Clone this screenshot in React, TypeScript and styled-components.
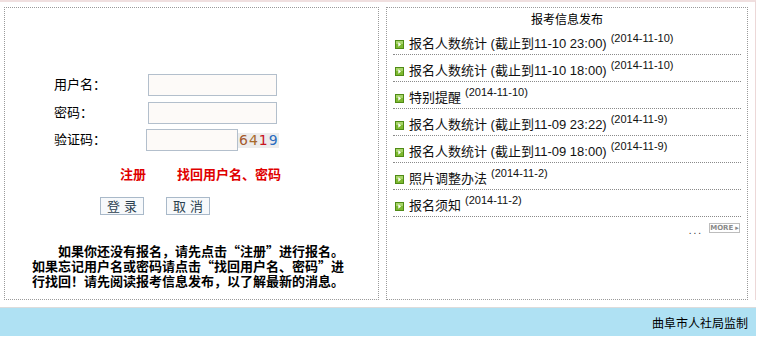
import styled, { createGlobalStyle } from 'styled-components'

const GlobalStyle = createGlobalStyle`
    body {
        margin: 0;
        background: #fff;
        font-family: "Liberation Sans", "Noto Sans CJK SC", sans-serif;
        color: #000;
    }
`

const Page = styled.div`
    width: 756px;
`

const Main = styled.div`
    display: flex;
    gap: 7px;
    padding: 5px 7px 0 4px;
    border-top: 2px solid #f0dfdf;
    border-right: 1px solid #ecd8d8;
`

const Panel = styled.div<{ $width: number }>`
    width: ${p => p.$width}px;
    height: 293px;
    box-sizing: border-box;
    border: 1px dotted #9a9a9a;
    display: flex;
    flex-direction: column;
`

const LoginForm = styled.div`
    display: grid;
    grid-template-columns: 94px 131px;
    grid-auto-rows: 22px;
    row-gap: 5.5px;
    align-items: center;
    margin: 66px 0 0 49px;
    font-size: 13px;
`

const Label = styled.label`
    line-height: 22px;
`

const Input = styled.input<{ $width?: number }>`
    box-sizing: border-box;
    width: ${p => p.$width ?? 129}px;
    height: 22px;
    border: 1px solid #b3bfcc;
    background: #fdfaf8;
    padding: 0 3px;
    font-size: 13px;
    outline: none;
`

const CaptchaCell = styled.div`
    display: flex;
    align-items: center;
    margin-left: -2px;
`

const Captcha = styled.span`
    display: inline-flex;
    align-items: center;
    height: 15px;
    width: 40px;
    background: #ececec;
    font-family: "DejaVu Sans", sans-serif;
    font-size: 14px;
    letter-spacing: 1px;
    padding-left: 1px;
`

const Digit = styled.span<{ $color: string }>`
    color: ${p => p.$color};
`

const Links = styled.div`
    display: flex;
    gap: 31px;
    margin: 15px 0 0 115px;
    line-height: 16px;
    font-size: 13px;
    font-weight: bold;
    font-family: "Noto Sans CJK SC", sans-serif;
`

const RedLink = styled.a`
    color: #e00000;
    text-decoration: none;
    cursor: pointer;
`

const Buttons = styled.div`
    display: flex;
    gap: 22px;
    margin: 15px 0 0 95px;
`

const Btn = styled.button`
    width: 44px;
    height: 18px;
    padding: 0;
    border: 1px solid #a9b9c9;
    background: #f7f9fb;
    color: #2b3f4f;
    font-family: "Noto Sans CJK SC", sans-serif;
    font-size: 13px;
    line-height: 16px;
    letter-spacing: 4px;
    text-indent: 4px;
    cursor: pointer;
`

const Notice = styled.p`
    margin: 28px 0 0 27px;
    width: 316px;
    font-size: 13px;
    line-height: 15px;
    font-weight: bold;
    text-indent: 26px;
    font-family: "Noto Sans CJK SC", sans-serif;
`

const NewsTitle = styled.div`
    text-align: center;
    font-size: 12px;
    line-height: 16px;
    margin-top: 3px;
    font-family: "Noto Sans CJK SC", sans-serif;
`

const NewsList = styled.ul`
    list-style: none;
    margin: 1px 6px 0 6px;
    padding: 0;
`

const NewsItem = styled.li`
    display: flex;
    align-items: flex-start;
    padding: 8px 0 2px 2px;
    height: 16px;
    border-bottom: 1px dotted #8a8a8a;
    font-size: 13px;
    line-height: 16px;
    color: #111;
`

const Bullet = styled.svg`
    flex: none;
    margin: 4px 5px 0 0;
`

const NewsDate = styled.span`
    font-size: 11px;
    line-height: 11px;
    margin-left: 4px;
    position: relative;
    top: -3px;
    font-family: "Liberation Sans", sans-serif;
`

const MoreRow = styled.div`
    display: flex;
    justify-content: flex-end;
    align-items: center;
    gap: 6px;
    margin: 4px 7px 0 0;
`

const Dots = styled.span`
    font-size: 10px;
    letter-spacing: 2px;
    color: #333;
    line-height: 8px;
    padding-top: 6px;
`

const MoreBtn = styled.span`
    display: inline-flex;
    align-items: center;
    justify-content: center;
    gap: 2px;
    width: 31px;
    height: 10px;
    box-sizing: border-box;
    border: 1px solid #bdbdbd;
    font-size: 7px;
    font-weight: bold;
    color: #8a8a8a;
    font-family: "DejaVu Sans", sans-serif;
`

const Footer = styled.div`
    margin-top: 7px;
    border-top: 1px solid #dcdcdc;
    background: #afe1f3;
    height: 28px;
    display: flex;
    align-items: center;
    justify-content: flex-end;
    padding-right: 8px;
    font-size: 12px;
    font-family: "Noto Sans CJK SC", sans-serif;
`

const news = [
    { title: '报名人数统计 (截止到11-10 23:00)', date: '(2014-11-10)' },
    { title: '报名人数统计 (截止到11-10 18:00)', date: '(2014-11-10)' },
    { title: '特别提醒', date: '(2014-11-10)' },
    { title: '报名人数统计 (截止到11-09 23:22)', date: '(2014-11-9)' },
    { title: '报名人数统计 (截止到11-09 18:00)', date: '(2014-11-9)' },
    { title: '照片调整办法', date: '(2014-11-2)' },
    { title: '报名须知', date: '(2014-11-2)' },
]

function ArrowIcon() {
    return (
        <Bullet width="9" height="9" viewBox="0 0 9 9">
            <rect x="0.5" y="0.5" width="8" height="8" fill="#7cb82f" stroke="#4f8a16" />
            <rect x="1" y="1" width="7" height="3" fill="#a6d468" />
            <path d="M3.3 2.2 L6 4.5 L3.3 6.8 Z" fill="#fff" />
        </Bullet>
    )
}

export default function App() {
    return (
        <Page>
            <GlobalStyle />
            <Main>
                <Panel $width={375}>
                    <LoginForm>
                        <Label htmlFor="user">用户名：</Label>
                        <Input id="user" type="text" />
                        <Label htmlFor="pwd">密码：</Label>
                        <Input id="pwd" type="password" />
                        <Label htmlFor="code">验证码：</Label>
                        <CaptchaCell>
                            <Input id="code" type="text" $width={92} />
                            <Captcha>
                                <Digit $color="#a5592c">6</Digit>
                                <Digit $color="#a86a2a">4</Digit>
                                <Digit $color="#c8141e">1</Digit>
                                <Digit $color="#2a6cc0">9</Digit>
                            </Captcha>
                        </CaptchaCell>
                    </LoginForm>
                    <Links>
                        <RedLink>注册</RedLink>
                        <RedLink>找回用户名、密码</RedLink>
                    </Links>
                    <Buttons>
                        <Btn type="button">登录</Btn>
                        <Btn type="button">取消</Btn>
                    </Buttons>
                    <Notice>
                        如果你还没有报名，请先点击“注册”进行报名。如果忘记用户名或密码请点击“找回用户名、密码”进行找回！请先阅读报考信息发布，以了解最新的消息。
                    </Notice>
                </Panel>
                <Panel $width={362}>
                    <NewsTitle>报考信息发布</NewsTitle>
                    <NewsList>
                        {news.map((n, i) => (
                            <NewsItem key={i}>
                                <ArrowIcon />
                                <span>{n.title}</span>
                                <NewsDate>{n.date}</NewsDate>
                            </NewsItem>
                        ))}
                    </NewsList>
                    <MoreRow>
                        <Dots>...</Dots>
                        <MoreBtn>MORE<span>▸</span></MoreBtn>
                    </MoreRow>
                </Panel>
            </Main>
            <Footer>曲阜市人社局监制</Footer>
        </Page>
    )
}
